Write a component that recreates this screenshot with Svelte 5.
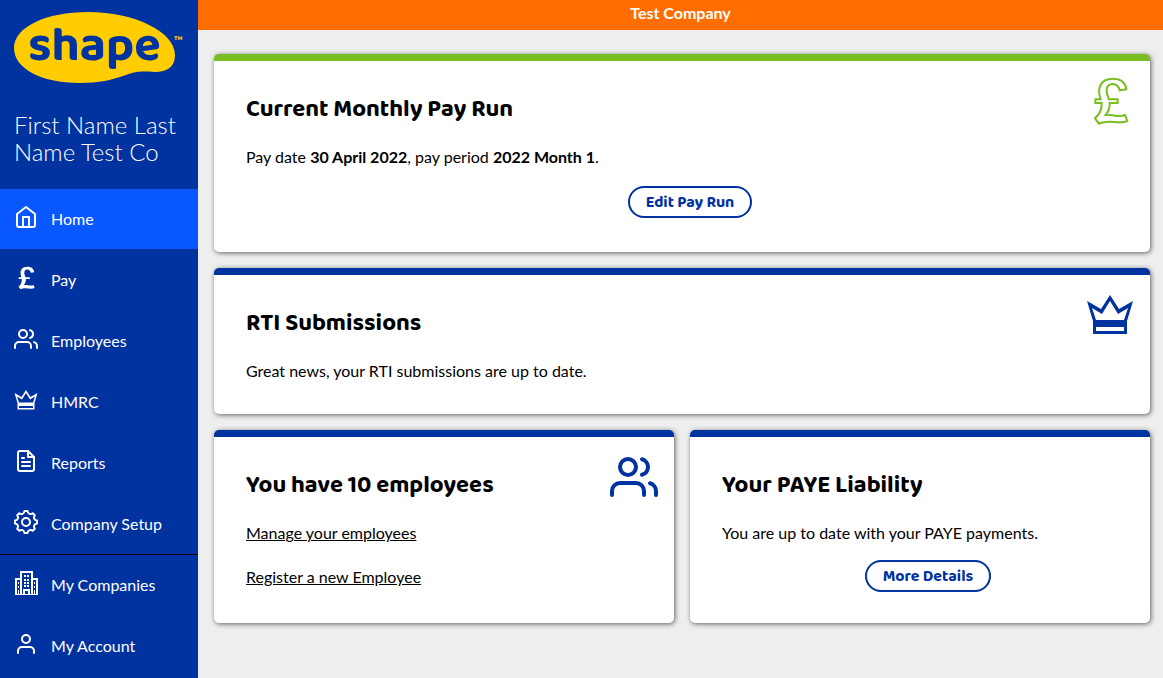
<script lang="ts">
  let current = $state('Home');

  const mainLinks = [
    { label: 'Home', icon: 'home' },
    { label: 'Pay', icon: 'pound' },
    { label: 'Employees', icon: 'users' },
    { label: 'HMRC', icon: 'crown' },
    { label: 'Reports', icon: 'file' },
    { label: 'Company Setup', icon: 'gear' }
  ];

  const accountLinks = [
    { label: 'My Companies', icon: 'building' },
    { label: 'My Account', icon: 'user' }
  ];
</script>

{#snippet icon(name: string)}
  {#if name === 'pound'}
    <svg class="icon solid" viewBox="78 111 144 144" aria-hidden="true">
      <path d="M199 148L179 151C176 138 168 132 157 132C144 133 139 142 140 155C141 165 145 172 147 178H173V189H149C150 202 146 214 137 225C158 222 174 234 195 225L202 243C172 256 150 235 117 251L105 235C120 222 126 208 125 189H106V178H122C111 148 119 116 158 116C183 116 197 129 199 148Z" />
    </svg>
  {:else if name === 'crown'}
    <svg class="icon solid" viewBox="0 0 48 48" aria-hidden="true">
      <path fill-rule="evenodd" d="M1 10L15 18L24 4L33 18L47 10L41 30V43H7V30ZM6 17L10 29H38L42 17L32 23L24 10L16 23ZM10 36V40H38V36Z" />
    </svg>
  {:else if name === 'building'}
    <svg class="icon solid" viewBox="0 0 24 24" aria-hidden="true">
      <path fill-rule="evenodd" d="M6 0H19V7H24V24H1V7H6ZM8 2V23H9V18H16V23H17V2ZM3 9V23H6V9ZM19 9V23H22V9ZM11 20V23H14V20Z" />
      <path d="M10 4h2v2h-2zM13 4h2v2h-2zM10 8h2v2h-2zM13 8h2v2h-2zM10 11h2v2h-2zM13 11h2v2h-2zM10 14h2v2h-2zM13 14h2v2h-2zM4 11h1v2H4zM4 15h1v2H4zM4 19h1v4H4zM20 11h1v2h-1zM20 15h1v2h-1zM20 19h1v4h-1z" />
    </svg>
  {:else}
    <svg class="icon line" viewBox="0 0 24 24" aria-hidden="true">
      {#if name === 'home'}
        <path d="M3 9l9-7 9 7v11a2 2 0 0 1-2 2H5a2 2 0 0 1-2-2z" />
        <path d="M9 22V12h6v10" />
      {:else if name === 'users'}
        <path d="M17 21v-2a4 4 0 0 0-4-4H5a4 4 0 0 0-4 4v2" />
        <circle cx="9" cy="7" r="4" />
        <path d="M23 21v-2a4 4 0 0 0-3-3.87M16 3.13a4 4 0 0 1 0 7.75" />
      {:else if name === 'file'}
        <path d="M14 2H6a2 2 0 0 0-2 2v16a2 2 0 0 0 2 2h12a2 2 0 0 0 2-2V8z" />
        <path d="M14 2v6h6M16 13H8M16 17H8M10 9H8" />
      {:else if name === 'gear'}
        <circle cx="12" cy="12" r="4" />
        <path d="M10.5 1H13.5C13.8 3.8 16.7 5 18.7 3.2L20.8 5.3C19 7.3 20.2 10.2 23 10.5V13.5C20.2 13.8 19 16.7 20.8 18.7L18.7 20.8C16.7 19 13.8 20.2 13.5 23H10.5C10.2 20.2 7.3 19 5.3 20.8L3.2 18.7C5 16.7 3.8 13.8 1 13.5V10.5C3.8 10.2 5 7.3 3.2 5.3L5.3 3.2C7.3 5 10.2 3.8 10.5 1Z" />
      {:else}
        <path d="M20 21v-2a4 4 0 0 0-4-4H8a4 4 0 0 0-4 4v2" />
        <circle cx="12" cy="7" r="4" />
      {/if}
    </svg>
  {/if}
{/snippet}

{#snippet navList(links: { label: string; icon: string }[])}
  <ul>
    {#each links as link}
      <li>
        <a href="#{link.icon}" class:active={current === link.label} onclick={() => (current = link.label)}>
          {@render icon(link.icon)}
          <span>{link.label}</span>
        </a>
      </li>
    {/each}
  </ul>
{/snippet}

<div class="app">
  <aside class="sidebar">
    <svg class="logo" viewBox="0 0 170 72" role="img" aria-label="shape">
      <path d="M74 0C121 0 161 20 161 43C161 55 153 60 141 60C130 60 126 58 112 63C98 68 85 71 66 71C26 71 0 56 0 36C0 15 32 0 74 0Z" />
      <text class="wordmark" x="14" y="48">shape</text>
      <text class="mark" x="160" y="33">™</text>
    </svg>
    <p class="user-name">First Name Last Name Test Co</p>
    <nav>
      {@render navList(mainLinks)}
      {@render navList(accountLinks)}
    </nav>
  </aside>

  <div class="page">
    <header class="company-bar">Test Company</header>
    <main>
      <section class="card pay-run">
        <div class="card-header">
          <h2>Current Monthly Pay Run</h2>
          {@render icon('pound')}
        </div>
        <p>Pay date <b>30 April 2022</b>, pay period <b>2022 Month 1</b>.</p>
        <div class="actions"><button type="button">Edit Pay Run</button></div>
      </section>

      <section class="card">
        <div class="card-header">
          <h2>RTI Submissions</h2>
          {@render icon('crown')}
        </div>
        <p>Great news, your RTI submissions are up to date.</p>
      </section>

      <div class="columns">
        <section class="card">
          <div class="card-header">
            <h2>You have 10 employees</h2>
            {@render icon('users')}
          </div>
          <p><a href="#manage">Manage your employees</a></p>
          <p><a href="#register">Register a new Employee</a></p>
        </section>

        <section class="card">
          <div class="card-header">
            <h2>Your PAYE Liability</h2>
          </div>
          <p>You are up to date with your PAYE payments.</p>
          <div class="actions"><button type="button">More Details</button></div>
        </section>
      </div>
    </main>
  </div>
</div>

<style>
  :global(body) {
    background: #eee;
  }

  .app {
    --navy: #0032a0;
    --display: 'Baloo 2', Baloo, Lato, sans-serif;
    display: flex;
    min-height: 100vh;
    color: #000;
    font: 16px/24px Lato, sans-serif;
  }

  .sidebar {
    flex: 0 0 198px;
    background: var(--navy);
    color: #fff;
  }

  .logo {
    display: block;
    width: 170px;
    margin: 12px 14px 27px;
    overflow: visible;
    fill: #ffcd00;
  }

  .wordmark {
    font: 700 49px var(--display);
    fill: var(--navy);
  }

  .mark {
    font: 700 12px Lato, sans-serif;
  }

  .user-name {
    margin: 0 14px 24px;
    font-size: 24px;
    font-weight: 300;
    line-height: 27px;
  }

  ul {
    display: grid;
    gap: 1px;
    margin: 0;
    padding: 0;
    list-style: none;
  }

  ul + ul {
    border-top: 1px solid #000;
  }

  nav a {
    display: flex;
    align-items: center;
    gap: 13px;
    padding: 16px 14px 20px;
    color: #fff;
    text-decoration: none;
  }

  nav a span {
    padding-top: 4px;
    line-height: 20px;
  }

  nav a.active {
    background: #0857ff;
  }

  .icon {
    flex: none;
    width: 24px;
    height: 24px;
  }

  .line {
    fill: none;
    stroke: currentColor;
    stroke-width: 2;
    stroke-linecap: round;
    stroke-linejoin: round;
  }

  .solid {
    fill: currentColor;
  }

  .page {
    flex: 1;
    min-width: 0;
  }

  .company-bar {
    padding: 1px 16px 5px;
    background: #ff6d00;
    color: #fff;
    font-weight: 700;
    text-align: center;
  }

  main {
    display: grid;
    gap: 16px;
    padding: 24px 13px 24px 16px;
  }

  .columns {
    display: grid;
    grid-template-columns: 1fr 1fr;
    gap: 16px;
  }

  .card {
    padding: 16px 16px 31px 32px;
    border-top: 7px solid var(--navy);
    border-radius: 5px;
    background: #fff;
    box-shadow: 1px 1px 5px rgba(0, 0, 0, 0.6);
  }

  .card-header {
    display: flex;
    justify-content: space-between;
    min-height: 48px;
    color: var(--navy);
  }

  .card-header .icon {
    width: 48px;
    height: 48px;
  }

  h2 {
    margin: 18px 0 0;
    color: #000;
    font: 700 24px/30px var(--display);
  }

  .card p {
    margin: 20px 0 0;
  }

  .card a {
    color: inherit;
  }

  .actions {
    margin-top: 15px;
    text-align: center;
  }

  button {
    padding: 3px 16px 1px;
    border: 2px solid var(--navy);
    border-radius: 16px;
    background: #fff;
    color: var(--navy);
    font: 700 16px/24px var(--display);
    cursor: pointer;
    vertical-align: top;
  }

  .pay-run {
    border-top-color: #78be20;
  }

  .pay-run .icon {
    fill: none;
    color: #78be20;
    stroke: currentColor;
    stroke-width: 6;
  }

  .pay-run .actions {
    margin: 17px 0 3px;
  }
</style>
